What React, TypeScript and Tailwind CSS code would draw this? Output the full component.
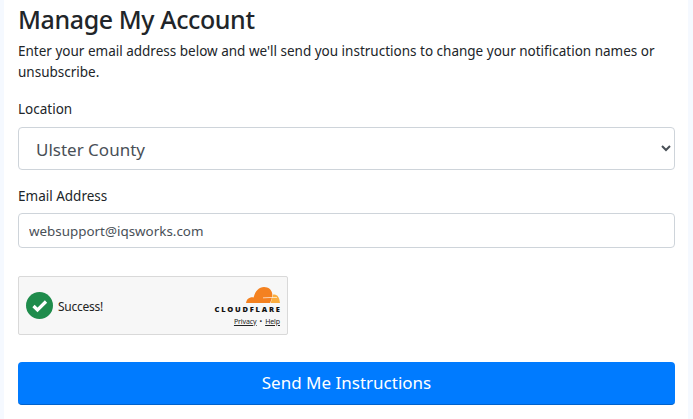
const font = { fontFamily: '"Noto Sans", "Open Sans", sans-serif' };

function CloudflareLogo() {
  return (
    <svg width="34" height="18" viewBox="0 0 34 18" className="block">
      <path
        d="M0 17 C0.4 14 2 12 4.5 11.5 C5.6 11.2 6.6 11.2 7.6 11.6 C8.8 6 12.5 1 18 1 C22.5 1 25.6 3.8 26.2 7.4 C26.6 10.5 25.4 14 24 17 Z"
        fill="#f48120"
      />
      <path d="M24.6 17 C25.6 14 26.6 11.5 26.8 8.8 C27.3 8.6 27.8 8.5 28.4 8.5 C31.6 8.5 33.6 12 34 17 Z" fill="#faad3f" />
      <path d="M17 11.6 L31 11 L31 11.8 L17 12.3 Z" fill="#ffffff" opacity="0.85" />
    </svg>
  );
}

function Turnstile() {
  return (
    <div className="flex h-[59px] w-[270px] items-center justify-between rounded-[2px] border border-[#d9d9d9] bg-[#f7f7f7] pl-[7px] pr-[7px]">
      <div className="flex items-center gap-[5px]">
        <svg width="27" height="27" viewBox="0 0 27 27">
          <circle cx="13.5" cy="13.5" r="13.5" fill="#1f8c4c" />
          <path d="M7.5 14 L11.5 18 L20 9.5" fill="none" stroke="#ffffff" strokeWidth="3.2" />
        </svg>
        <span className="pt-[2px] text-[12px] leading-none tracking-[-0.25px] text-[#232323]">Success!</span>
      </div>
      <div className="flex flex-col items-end">
        <CloudflareLogo />
        <span className="mt-[1px] mr-[-1.8px] text-[7.5px] leading-[8px] font-black tracking-[1.8px] text-[#111111]">CLOUDFLARE</span>
        <div className="mt-[4px] flex items-center gap-[3px] text-[7px] leading-[9px] tracking-[-0.1px] text-[#232323]">
          <span className="underline">Privacy</span>
          <span>•</span>
          <span className="underline">Help</span>
        </div>
      </div>
    </div>
  );
}

export default function App() {
  return (
    <div className="h-[419px] w-[693px] overflow-hidden bg-[#f5f9ff] px-[4px] pr-[5px]" style={font}>
      <div className="h-full bg-white pl-[14px] pr-[13px] text-[#212529]">
        <h1 className="pt-[1px] text-[25px] leading-[36px] font-medium tracking-[-0.4px]">Manage My Account</h1>
        <p className="mt-[4px] text-[13.5px] leading-[21px]">
          Enter your email address below and we'll send you instructions to change your notification names or unsubscribe.
        </p>
        <label className="mt-[16px] block text-[13.5px] leading-[21px]">Location</label>
        <select className="mt-[7px] block h-[43px] w-full rounded-[4px] border border-[#ced4da] bg-white pt-[1px] pl-[13px] text-[17px] text-[#495057]">
          <option>Ulster County</option>
        </select>
        <label className="mt-[16px] block text-[13.5px] leading-[21px]">Email Address</label>
        <input
          readOnly
          value="websupport@iqsworks.com"
          className="mt-[6px] block h-[35px] w-full rounded-[4px] border border-[#ced4da] bg-white px-[10px] text-[13.4px] text-[#495057]"
        />
        <div className="mt-[28px]">
          <Turnstile />
        </div>
        <button className="mt-[27px] block h-[43px] w-full rounded-[4px] border-b border-[#0062cc] bg-[#007bff] text-[17px] text-white">
          Send Me Instructions
        </button>
      </div>
    </div>
  );
}
